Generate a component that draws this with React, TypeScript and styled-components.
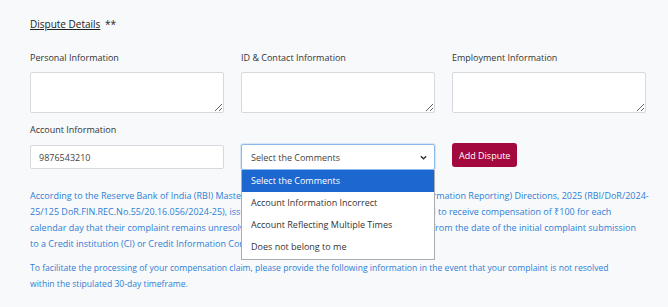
import React from 'react';
import styled, { createGlobalStyle } from 'styled-components';

const GlobalStyle = createGlobalStyle`
  html, body {
    margin: 0;
    padding: 0;
    background: #f7f9fb;
    font-family: "Open Sans", "Noto Sans", sans-serif;
  }
`;

const Page = styled.div`
  padding: 17px 22px 0 30px;
  color: #333;
`;

const Title = styled.h2`
  margin: 0 0 20px;
  font-size: 10px;
  font-weight: 400;
  line-height: 14px;
  color: #222;
  span {
    text-decoration: underline;
    margin-right: 2px;
  }
`;

const Grid = styled.div`
  display: grid;
  grid-template-columns: repeat(3, 194px);
  column-gap: 17px;
  row-gap: 10px;
  align-items: start;
`;

const Field = styled.div`
  display: flex;
  flex-direction: column;
`;

const Label = styled.label`
  font-size: 9px;
  line-height: 13px;
  margin-bottom: 8px;
  color: #333;
`;

const TextArea = styled.textarea`
  box-sizing: border-box;
  width: 194px;
  height: 41px;
  border: 1px solid #d6d9dd;
  border-radius: 2px;
  background: #fff;
  resize: vertical;
  margin: 0;
`;

const Input = styled.input`
  box-sizing: border-box;
  width: 194px;
  height: 24px;
  border: 1px solid #d6d9dd;
  border-radius: 2px;
  background: #fff;
  padding: 0 8px;
  font-family: inherit;
  font-size: 9px;
  color: #444;
  margin-top: 1px;
`;

const SelectWrap = styled.div`
  position: relative;
  width: 194px;
`;

const SelectBox = styled.div`
  box-sizing: border-box;
  width: 194px;
  height: 26px;
  border: 1px solid #8db8ea;
  border-radius: 2px;
  background: #fff;
  box-shadow: 0 0 0 1px #d8e7f8;
  display: flex;
  align-items: center;
  justify-content: space-between;
  padding: 0 6px 0 9px;
  font-size: 9px;
  color: #444;
`;

const Menu = styled.ul`
  position: absolute;
  top: 26px;
  left: 0;
  width: 194px;
  box-sizing: border-box;
  margin: 0;
  padding: 0 0 1px;
  list-style: none;
  background: #fff;
  border: 1px solid #a9adb2;
  border-top: none;
  z-index: 2;
`;

const Option = styled.li<{ $active?: boolean }>`
  height: 22px;
  line-height: 22px;
  padding-left: 9px;
  font-size: 9px;
  color: ${({ $active }) => ($active ? '#fff' : '#333')};
  background: ${({ $active }) => ($active ? '#1c67d0' : '#fff')};
`;

const Button = styled.button`
  align-self: flex-start;
  height: 24px;
  padding: 0 7px;
  border: none;
  border-radius: 3px;
  background: #a3093e;
  color: #fff;
  font-family: inherit;
  font-size: 9px;
  margin-top: -1px;
`;

const Notes = styled.div`
  margin-top: 18px;
  display: flex;
  flex-direction: column;
  gap: 8px;
`;

const Note = styled.p<{ $size?: number }>`
  margin: 0;
  font-size: ${({ $size = 9 }) => $size}px;
  line-height: 16px;
  color: #2f7ed3;
  white-space: nowrap;
`;

const options = [
  'Select the Comments',
  'Account Information Incorrect',
  'Account Reflecting Multiple Times',
  'Does not belong to me',
];

export default function App() {
  return (
    <Page>
      <GlobalStyle />
      <Title>
        <span>Dispute Details</span> **
      </Title>
      <Grid>
        <Field>
          <Label>Personal Information</Label>
          <TextArea />
        </Field>
        <Field>
          <Label>ID &amp; Contact Information</Label>
          <TextArea />
        </Field>
        <Field>
          <Label>Employment Information</Label>
          <TextArea />
        </Field>
        <Field>
          <Label>Account Information</Label>
          <Input defaultValue="9876543210" />
        </Field>
        <Field>
          <Label>&nbsp;</Label>
          <SelectWrap>
            <SelectBox>
              <span>Select the Comments</span>
              <svg width="9" height="9" viewBox="0 0 10 10">
                <path d="M2 3.5 L5 6.5 L8 3.5" fill="none" stroke="#333" strokeWidth="1.6" />
              </svg>
            </SelectBox>
            <Menu>
              {options.map((o, i) => (
                <Option key={o} $active={i === 0}>
                  {o}
                </Option>
              ))}
            </Menu>
          </SelectWrap>
        </Field>
        <Field>
          <Label>&nbsp;</Label>
          <Button>Add Dispute</Button>
        </Field>
      </Grid>
      <Notes>
        <Note>
          According to the Reserve Bank of India (RBI) Master Direction - Reserve Bank of India (Credit Information Reporting) Directions, 2025 (RBI/DoR/2024-
          <br />
          25/125 DoR.FIN.REC.No.55/20.16.056/2024-25), issued on January 6, 2025, customers are entitled to receive compensation of ₹100 for each
          <br />
          calendar day that their complaint remains unresolved beyond their stipulated period of 30 days from the date of the initial complaint submission
          <br />
          to a Credit institution (CI) or Credit Information Company (CIC).
        </Note>
        <Note $size={8.6}>
          To facilitate the processing of your compensation claim, please provide the following information in the event that your complaint is not resolved
          <br />
          within the stipulated 30-day timeframe.
        </Note>
      </Notes>
    </Page>
  );
}
